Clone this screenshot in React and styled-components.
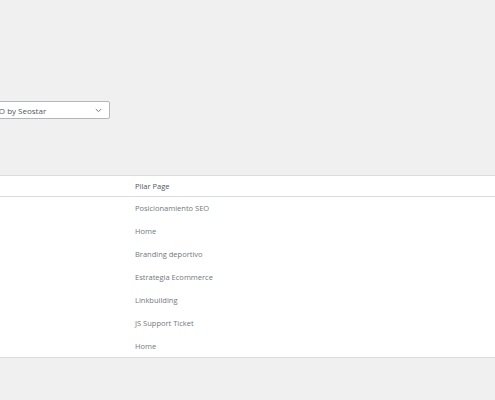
import React from "react";
import styled, { createGlobalStyle } from "styled-components";

const Global = createGlobalStyle`
  html, body { margin: 0; padding: 0; background: #f0f0f1; }
  body { font-family: "Open Sans", "Noto Sans", sans-serif; overflow: hidden; }
`;

const Page = styled.div`
  width: 495px;
  height: 400px;
  overflow: hidden;
  background: #f0f0f1;
  display: flex;
  flex-direction: column;
`;

const FilterBar = styled.div`
  display: flex;
  align-items: center;
  margin-top: 101px;
  margin-left: -20px;
`;

const Select = styled.div`
  box-sizing: border-box;
  width: 130px;
  height: 18px;
  display: flex;
  align-items: center;
  justify-content: space-between;
  padding: 0 7px 0 9px;
  background: #fff;
  border: 1px solid #b4b7ba;
  border-radius: 2px;
  font-size: 8px;
  color: #50575e;
`;

const Table = styled.div`
  margin-top: 56px;
  margin-left: -10px;
  width: 520px;
  background: #fff;
  border-top: 1px solid #dcdcde;
  border-bottom: 1px solid #dcdcde;
`;

const Row = styled.div`
  display: grid;
  grid-template-columns: 137px 1fr;
  height: ${(p) => (p.$head ? "20px" : "22.86px")};
  align-items: center;
  border-bottom: ${(p) => (p.$head ? "1px solid #dcdcde" : "none")};
  font-size: 7.5px;
  color: ${(p) => (p.$head ? "#50575e" : "#72777c")};
`;

const Cell = styled.div`
  padding-left: 8px;
  white-space: nowrap;
`;

const rows = [
  "Posicionamiento SEO",
  "Home",
  "Branding deportivo",
  "Estrategia Ecommerce",
  "Linkbuilding",
  "JS Support Ticket",
  "Home",
];

export default function App() {
  return (
    <>
      <Global />
      <Page>
        <FilterBar>
          <Select>
            <span>SEO by Seostar</span>
            <svg width="7" height="5" viewBox="0 0 7 5">
              <path d="M0.8 1 L3.5 3.7 L6.2 1" fill="none" stroke="#787c82" strokeWidth="1" />
            </svg>
          </Select>
        </FilterBar>
        <Table>
          <Row $head>
            <Cell />
            <Cell>Pilar Page</Cell>
          </Row>
          {rows.map((r, i) => (
            <Row key={i}>
              <Cell />
              <Cell>{r}</Cell>
            </Row>
          ))}
        </Table>
      </Page>
    </>
  );
}
